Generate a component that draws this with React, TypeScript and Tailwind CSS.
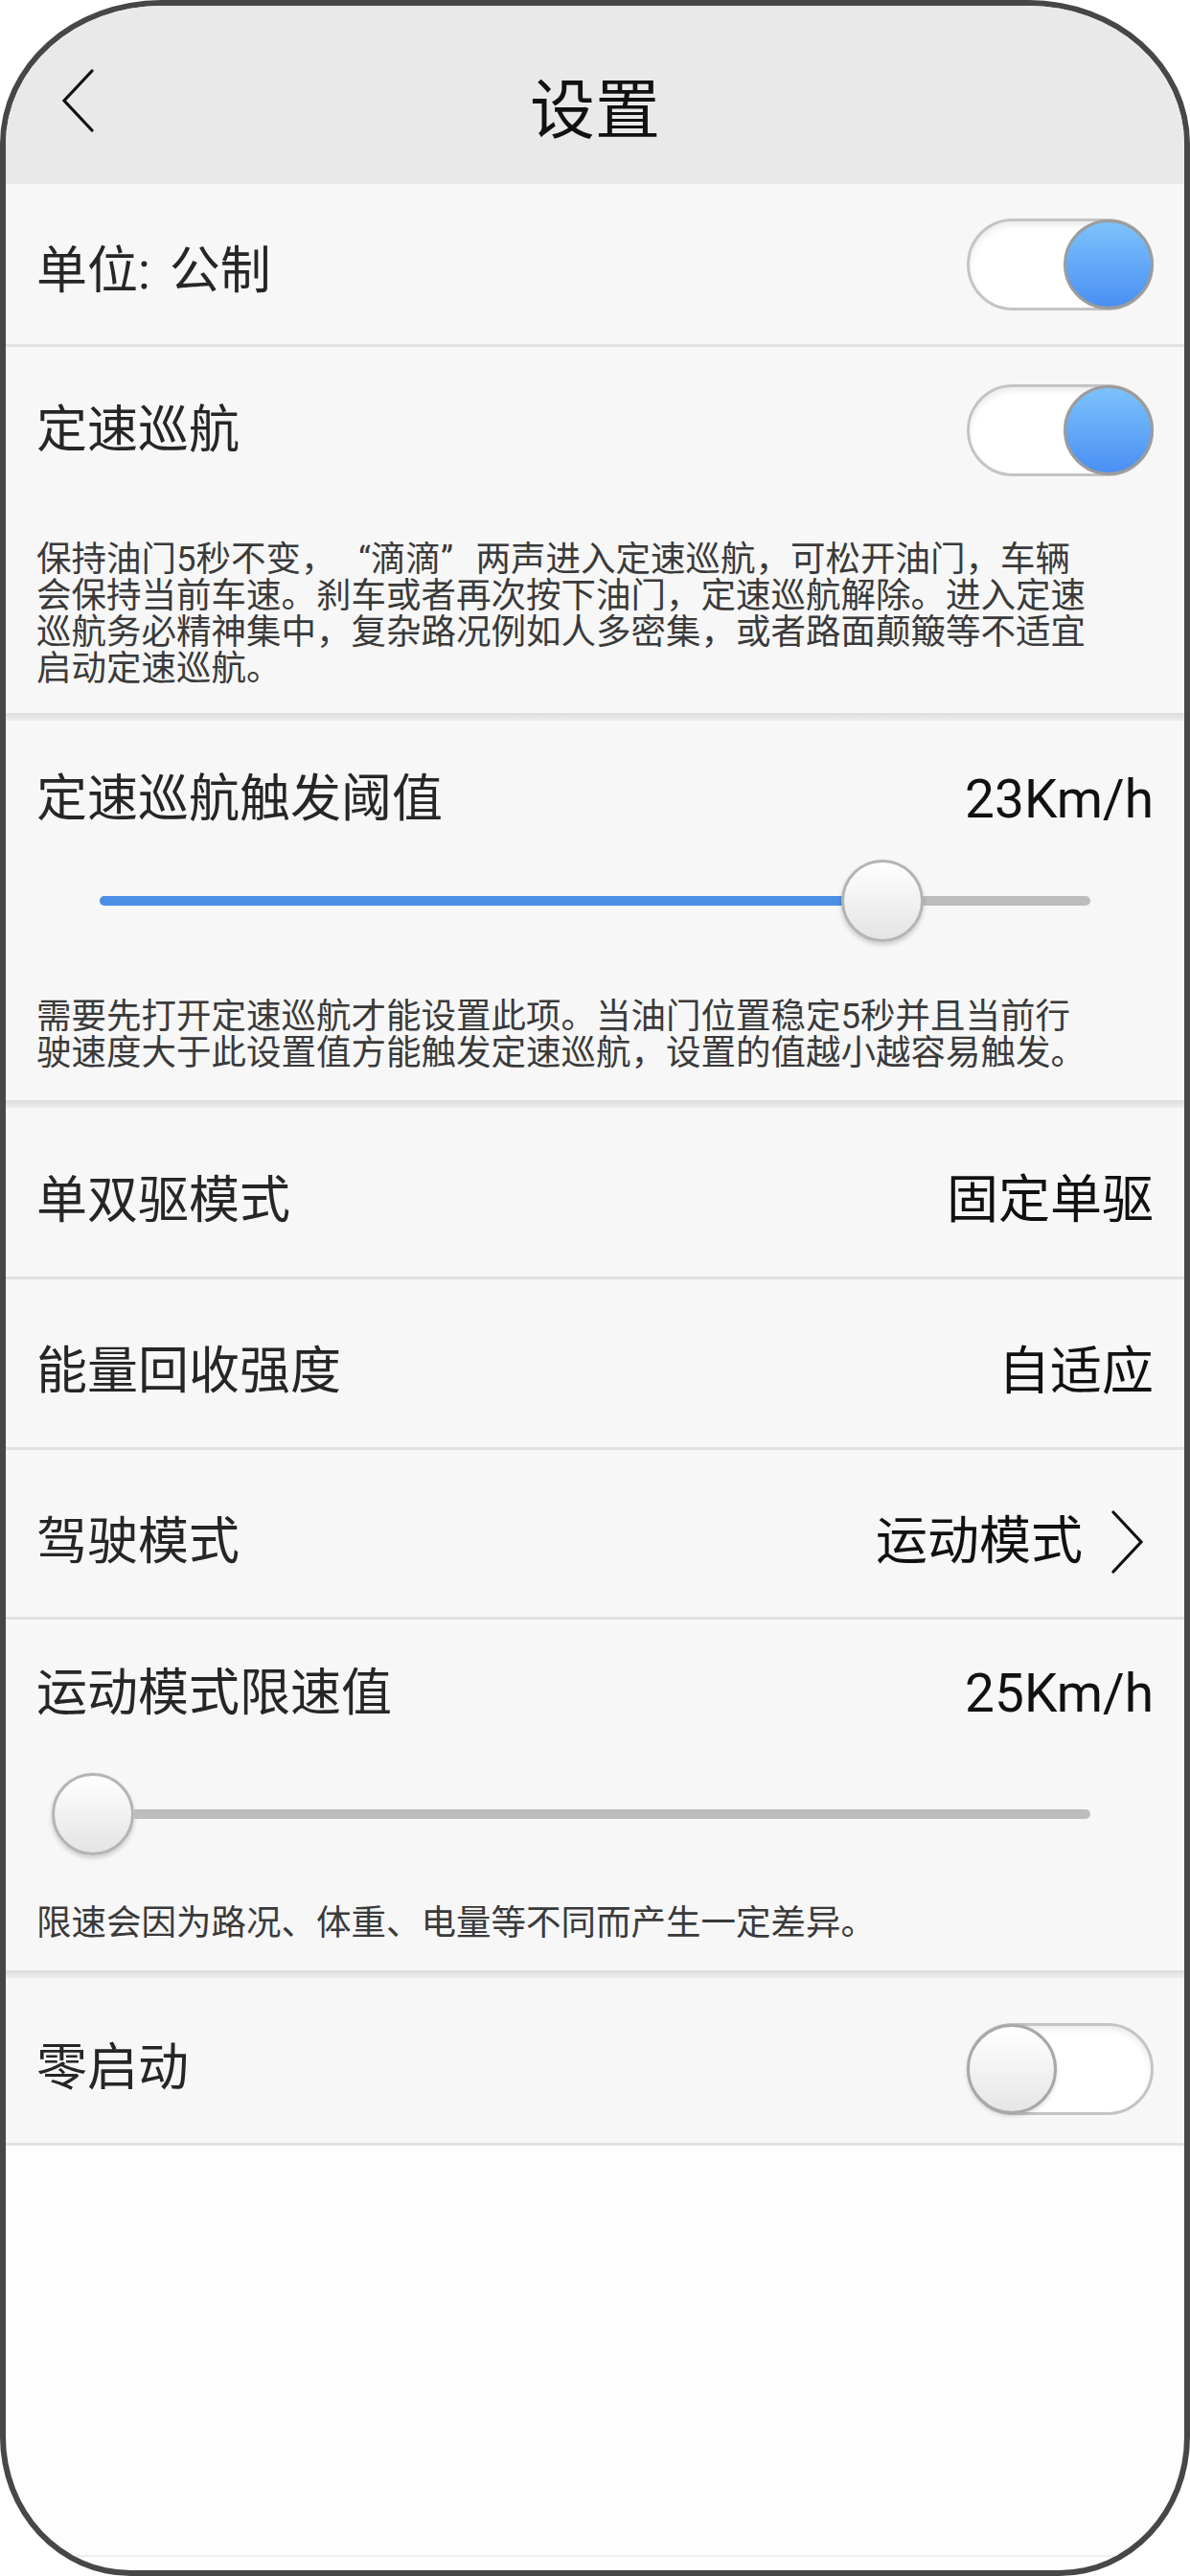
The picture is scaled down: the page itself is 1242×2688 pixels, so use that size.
import type { ReactNode } from 'react';

const font = { fontFamily: 'Roboto, "Noto Sans CJK SC", sans-serif' };

const Toggle = ({ on }: { on: boolean }) => (
  <div className="relative w-[195px] h-[96px] rounded-full bg-white border-[3px] border-[#c4c4c4] shadow-[inset_0_4px_6px_rgba(0,0,0,0.08)] flex items-center">
    {on ? (
      <div className="ml-auto -mr-[3px] w-[94px] h-[94px] rounded-full border-[3px] border-[#9c9c9c] bg-gradient-to-b from-[#7dc2fb] to-[#4a8ff4]" />
    ) : (
      <div className="-ml-[3px] w-[94px] h-[94px] rounded-full border-[3px] border-[#a8a8a8] bg-gradient-to-b from-white to-[#e6e6e6] shadow-[0_2px_4px_rgba(0,0,0,0.15)]" />
    )}
  </div>
);

const Thumb = () => (
  <div className="w-[86px] h-[86px] rounded-full border-[3px] border-[#b4b4b4] bg-gradient-to-b from-white to-[#e4e4e4] shadow-[0_3px_5px_rgba(0,0,0,0.18)]" />
);

const Slider = ({ value }: { value: number }) => (
  <div className="h-[96px] px-[98px] flex items-center">
    <div className="relative flex-1 h-[10px] rounded-full bg-[#bdbdbd]">
      <div className="h-full rounded-full bg-[#4a8fe6]" style={{ width: `${value}%` }} />
      <div className="absolute top-1/2 -translate-y-1/2 -translate-x-1/2" style={{ left: `${value}%` }}>
        <Thumb />
      </div>
    </div>
  </div>
);

const Chevron = ({ dir }: { dir: 'left' | 'right' }) => (
  <svg width="36" height="66" viewBox="0 0 36 66" fill="none" stroke="#111" strokeWidth="3.2" strokeLinecap="round" strokeLinejoin="miter">
    {dir === 'left' ? <path d="M32 2 L3 33 L32 64" /> : <path d="M4 2 L33 33 L4 64" />}
  </svg>
);

const Row = ({
  label,
  right,
  className,
  labelClass,
}: {
  label: ReactNode;
  right?: ReactNode;
  className: string;
  labelClass?: string;
}) => (
  <div className={`${className} pl-[32px] pr-[32px] flex items-center justify-between`}>
    <span className={`text-[53px] leading-none text-[#262626] ${labelClass ?? ''}`}>{label}</span>
    {right}
  </div>
);

const Value = ({ children, km }: { children: ReactNode; km?: boolean }) => (
  <span className={`${km ? 'text-[55px]' : 'text-[54px]'} leading-none text-[#111]`}>{children}</span>
);

const Desc = ({ lines, className }: { lines: ReactNode[]; className?: string }) => (
  <div className={`pl-[32px] text-[36.5px] leading-[38px] text-[#3a3a3a] ${className ?? ''}`}>
    {lines.map((l, i) => (
      <div key={i} className="whitespace-nowrap">{l}</div>
    ))}
  </div>
);

const Sep = () => <div className="h-[3px] bg-[#e1e1e1]" />;
const ThickSep = () => <div className="h-[8px] bg-gradient-to-b from-[#dcdcdc] to-[#eeeeee]" />;

export default function App() {
  return (
    <div className="w-[1242px] h-[2688px] bg-white" style={font}>
      <div className="h-full flex flex-col overflow-hidden border-[6px] border-[#474747] rounded-tl-[168px_150px] rounded-tr-[168px_150px] rounded-bl-[136px_145px] rounded-br-[136px_145px] bg-[#fdfdfd]">
        <header className="h-[186px] shrink-0 bg-[#e9e9e9] relative flex items-start justify-center pt-[76px]">
          <div className="absolute left-[58px] top-[66px]">
            <Chevron dir="left" />
          </div>
          <h1 className="text-[68px] leading-none text-[#111]">设置</h1>
        </header>

        <div className="bg-[#f7f7f7]">
          <Row
            label={
              <>
                单位:<span className="inline-block w-[20px]" />公制
              </>
            }
            className="h-[167px]"
            labelClass="mt-[16px]"
            right={<Toggle on />}
          />
          <Sep />

          <Row label="定速巡航" className="h-[174px]" right={<Toggle on />} />
          <Desc
            className="pt-[29px] pb-[27px]"
            lines={[
              <>
                保持油门5秒不变，<span className="inline-block w-[1em] text-right">“</span>滴滴
                <span className="inline-block w-[1em] text-left">”</span>两声进入定速巡航，可松开油门，车辆
              </>,
              '会保持当前车速。刹车或者再次按下油门，定速巡航解除。进入定速',
              '巡航务必精神集中，复杂路况例如人多密集，或者路面颠簸等不适宜',
              '启动定速巡航。',
            ]}
          />
          <ThickSep />

          <Row label="定速巡航触发阈值" className="h-[140px] pt-[24px]" right={<Value km>23Km/h</Value>} />
          <Slider value={79} />
          <Desc
            className="pt-[54px] pb-[30px]"
            lines={[
              '需要先打开定速巡航才能设置此项。当油门位置稳定5秒并且当前行',
              '驶速度大于此设置值方能触发定速巡航，设置的值越小越容易触发。',
            ]}
          />
          <ThickSep />

          <Row label="单双驱模式" className="h-[176px] pt-[18px]" right={<Value>固定单驱</Value>} />
          <Sep />
          <Row label="能量回收强度" className="h-[175px] pt-[18px]" right={<Value>自适应</Value>} />
          <Sep />
          <Row
            label="驾驶模式"
            className="h-[174px] pt-[18px]"
            right={
              <div className="flex items-center gap-[28px] mr-[10px]">
                <Value>运动模式</Value>
                <Chevron dir="right" />
              </div>
            }
          />
          <Sep />

          <Row label="运动模式限速值" className="h-[155px]" right={<Value km>25Km/h</Value>} />
          <div className="h-[96px] pl-[48px] pr-[98px] flex items-center">
            <Thumb />
            <div className="flex-1 h-[10px] rounded-r-full bg-[#bdbdbd]" />
          </div>
          <Desc className="pt-[47px] pb-[30px]" lines={['限速会因为路况、体重、电量等不同而产生一定差异。']} />
          <ThickSep />

          <Row label="零启动" className="h-[172px] pt-[17px]" right={<Toggle on={false} />} />
          <Sep />
        </div>

        <div className="flex-1" />
        <div className="h-[2px] bg-[#efefef] mx-[30px] mb-[14px]" />
      </div>
    </div>
  );
}
